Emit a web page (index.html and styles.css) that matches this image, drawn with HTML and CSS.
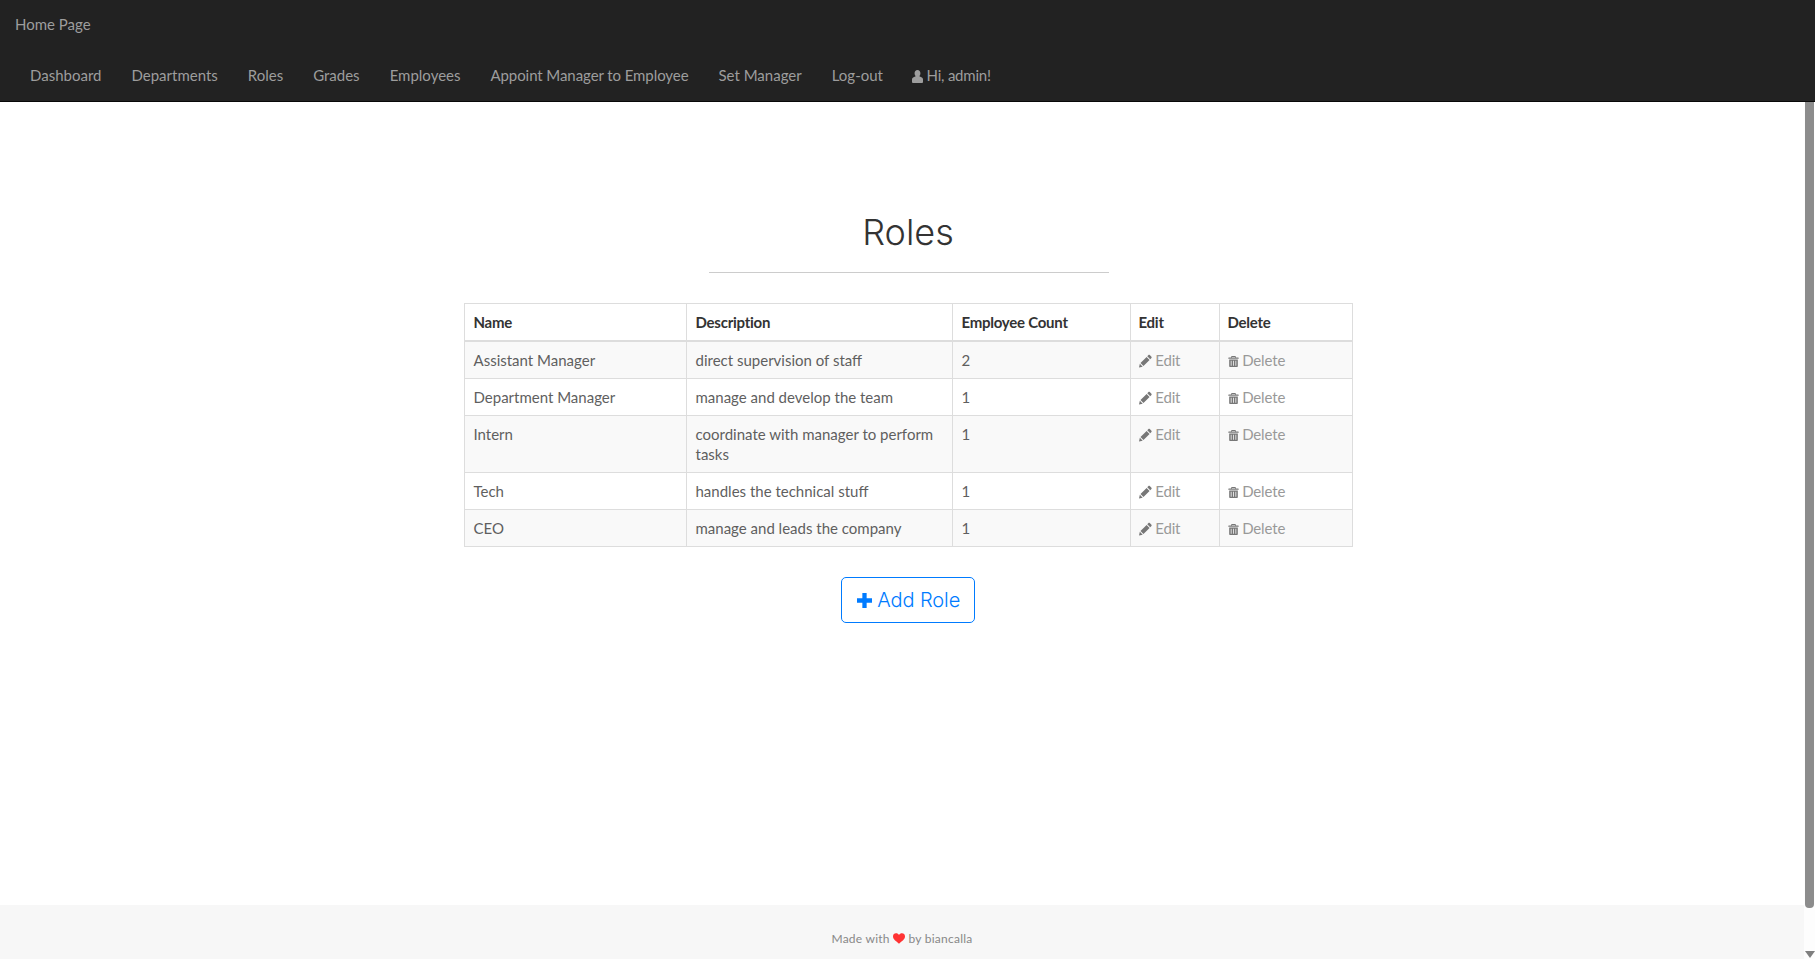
FILE: index.html
```html
<!DOCTYPE html>
<html lang="en">
<head>
<meta charset="utf-8">
<title>Roles</title>
<link rel="stylesheet" href="styles.css">
</head>
<body>
<header class="navbar">
  <a class="brand" href="#">Home Page</a>
  <nav class="nav">
    <a href="#">Dashboard</a>
    <a href="#">Departments</a>
    <a href="#">Roles</a>
    <a href="#">Grades</a>
    <a href="#">Employees</a>
    <a class="nav-long" href="#">Appoint Manager to Employee</a>
    <a href="#">Set Manager</a>
    <a href="#">Log-out</a>
    <a class="nav-user" href="#"><svg class="icon icon-user" viewBox="0 0 12 14"><path d="M6 0C4 0 2.800 1.500 2.800 3.500c0 1.300.5 2.400 1.200 3.100L1.200 8.200C.4 8.700 0 9.300 0 10.200V13c0 .6.400 1 1 1h10c.6 0 1-.4 1-1v-2.800c0-.9-.4-1.500-1.200-2L8 6.600c.7-.7 1.200-1.800 1.200-3.100C9.200 1.500 8 0 6 0z"/></svg> Hi, admin!</a>
  </nav>
</header>
<div class="shell">
  <div class="page">
    <main class="main">
      <h1 class="title">Roles</h1>
      <hr class="rule">
      <table class="table">
        <colgroup>
          <col class="c-name"><col class="c-desc"><col class="c-count"><col class="c-edit"><col class="c-del">
        </colgroup>
        <thead>
          <tr><th>Name</th><th>Description</th><th>Employee Count</th><th>Edit</th><th>Delete</th></tr>
        </thead>
        <tbody>
          <tr><td>Assistant Manager</td><td>direct supervision of staff</td><td>2</td>
            <td><a class="act" href="#"><svg class="icon" viewBox="0 0 14 14"><use href="#pencil"/></svg> Edit</a></td>
            <td><a class="act" href="#"><svg class="icon icon-trash" viewBox="0 0 14 14"><use href="#trash"/></svg> Delete</a></td></tr>
          <tr><td>Department Manager</td><td>manage and develop the team</td><td>1</td>
            <td><a class="act" href="#"><svg class="icon" viewBox="0 0 14 14"><use href="#pencil"/></svg> Edit</a></td>
            <td><a class="act" href="#"><svg class="icon icon-trash" viewBox="0 0 14 14"><use href="#trash"/></svg> Delete</a></td></tr>
          <tr><td>Intern</td><td>coordinate with manager to perform tasks</td><td>1</td>
            <td><a class="act" href="#"><svg class="icon" viewBox="0 0 14 14"><use href="#pencil"/></svg> Edit</a></td>
            <td><a class="act" href="#"><svg class="icon icon-trash" viewBox="0 0 14 14"><use href="#trash"/></svg> Delete</a></td></tr>
          <tr><td>Tech</td><td>handles the technical stuff</td><td>1</td>
            <td><a class="act" href="#"><svg class="icon" viewBox="0 0 14 14"><use href="#pencil"/></svg> Edit</a></td>
            <td><a class="act" href="#"><svg class="icon icon-trash" viewBox="0 0 14 14"><use href="#trash"/></svg> Delete</a></td></tr>
          <tr><td>CEO</td><td>manage and leads the company</td><td>1</td>
            <td><a class="act" href="#"><svg class="icon" viewBox="0 0 14 14"><use href="#pencil"/></svg> Edit</a></td>
            <td><a class="act" href="#"><svg class="icon icon-trash" viewBox="0 0 14 14"><use href="#trash"/></svg> Delete</a></td></tr>
        </tbody>
      </table>
      <a class="btn-add" href="#"><svg class="icon icon-plus" viewBox="0 0 14 14"><path d="M5 0h4v5h5v4H9v5H5V9H0V5h5z"/></svg> Add Role</a>
    </main>
    <footer class="footer">Made with <svg class="icon icon-heart" viewBox="0 0 14 12"><path d="M7 12C3.500 9 0 6.700 0 3.600 0 1.500 1.600 0 3.500 0 5 0 6.300.8 7 2 7.700.8 9 0 10.500 0 12.400 0 14 1.500 14 3.600 14 6.700 10.500 9 7 12z"/></svg> by biancalla</footer>
  </div>
  <div class="scrollbar">
    <div class="thumb"></div>
    <div class="arrow"></div>
  </div>
</div>
<svg class="defs" aria-hidden="true">
  <defs>
    <g id="pencil"><path d="M10.200 .6c.4-.4 1-.4 1.400 0l1.800 1.800c.4.4.4 1 0 1.400l-1.300 1.300L8.900 1.900zM8.200 2.600 11.400 5.800 4.800 12.400 1.600 9.200zM.9 10l3.100 3.100-4 .9z"/></g>
    <g id="trash"><path fill-rule="evenodd" d="M5 0h4c.6 0 1 .4 1 1v1h3c.4 0 .6.3.6.6v1H.4v-1c0-.3.2-.6.6-.6h3V1c0-.6.4-1 1-1zm0 1.200V2h4v-.8zM1.500 4.500h11V13c0 .6-.4 1-1 1h-9c-.6 0-1-.4-1-1zM3.500 6v6.500h1V6zm3 0v6.500h1V6zm3 0v6.500h1V6z"/></g>
  </defs>
</svg>
</body>
</html>
```
FILE: styles.css
```css
* { box-sizing: border-box; }
html, body { margin: 0; height: 100%; overflow: hidden; }
body {
  display: flex;
  flex-direction: column;
  background: #fff;
  font-family: "Lato", "Noto Sans", sans-serif;
  font-size: 15px;
  line-height: 20px;
  color: #5f5f5f;
}
a { text-decoration: none; }
.defs { width: 0; height: 0; display: block; }
.icon { width: 13px; height: 14px; fill: currentColor; vertical-align: -2px; }

.navbar {
  flex: none;
  height: 102px;
  background: #222;
  border-bottom: 1px solid #080808;
}
.brand {
  display: block;
  padding: 14px 15px 0;
  height: 50px;
  color: #9d9d9d;
}
.nav { display: flex; padding-left: 15px; }
.nav a {
  padding: 15px;
  color: #9d9d9d;
}
.nav .nav-long { letter-spacing: -.08px; }
.nav .nav-user { letter-spacing: -.22px; margin-left: -1px; }
.icon-user { width: 11px; height: 13px; }

.shell { flex: 1; display: flex; min-height: 0; }
.page { flex: 1; display: flex; flex-direction: column; min-width: 0; }
.main {
  flex: 1;
  display: flex;
  flex-direction: column;
  align-items: center;
  padding-left: 12px;
}
.title {
  margin: 110px 0 0;
  font-family: "Inter", "Lato", sans-serif;
  font-size: 36px;
  line-height: 40px;
  font-weight: 300;
  letter-spacing: 0;
  color: #333;
}
.rule {
  width: 400px;
  height: 1px;
  margin: 20px 0 30px 2px;
  border: 0;
  background: #ccc;
}
.table {
  width: 888px;
  table-layout: fixed;
  border-collapse: collapse;
  border: 1px solid #ddd;
}
.c-name { width: 222px; }
.c-desc { width: 266px; }
.c-count { width: 178px; }
.c-edit { width: 89px; }
.c-del { width: 133px; }
.table th, .table td {
  padding: 8px;
  border: 1px solid #ddd;
  text-align: left;
  vertical-align: top;
}
.table th:nth-child(-n+3), .table td:nth-child(-n+3) { padding-left: 9px; }
.table th { color: #333; font-weight: 700; letter-spacing: -.25px; border-bottom-width: 2px; }
.table tbody tr:nth-child(odd) { background: #f9f9f9; }
.act { color: #999; letter-spacing: -.15px; }
.act .icon { color: #777; }
.act .icon-trash { width: 11px; height: 13px; }
.btn-add {
  display: block;
  margin-top: 30px;
  padding: 8px 14px 8px 15px;
  height: 46px;
  border: 1px solid #007bff;
  border-radius: 5px;
  color: #007bff;
  font-family: "Inter", "Lato", sans-serif;
  font-size: 20px;
  font-weight: 300;
  letter-spacing: -.1px;
  line-height: 28px;
}
.icon-plus { width: 15px; height: 15px; vertical-align: -1px; }
.footer {
  flex: none;
  height: 54px;
  padding-top: 25px;
  background: #f7f7f7;
  color: #888;
  font-size: 12px;
  letter-spacing: .25px;
  line-height: 18px;
  text-align: center;
}
.icon-heart { width: 12px; height: 11px; color: #f33; vertical-align: -1px; }

.scrollbar {
  flex: none;
  width: 11px;
  display: flex;
  flex-direction: column;
  align-items: flex-start;
  background: #fdfdfd;
  padding-left: 1px;
}
.thumb {
  flex: none;
  width: 9px;
  height: 806px;
  background: #8c8c8c;
  border-radius: 0 0 4px 4px;
}
.arrow {
  margin-top: auto;
  margin-bottom: 1px;
  width: 0;
  height: 0;
  border-left: 5px solid transparent;
  border-right: 5px solid transparent;
  border-top: 7px solid #7f7f7f;
}
```
